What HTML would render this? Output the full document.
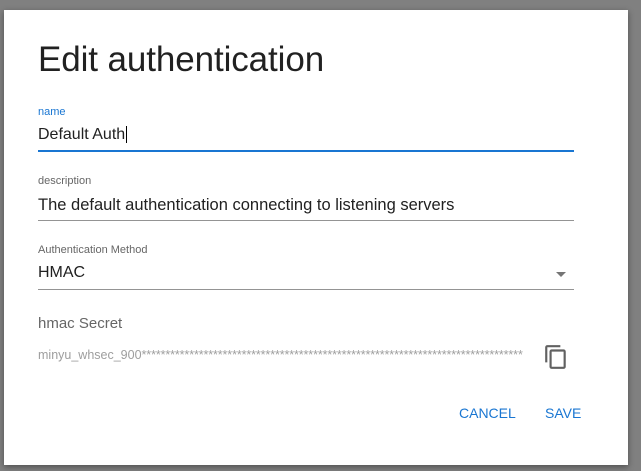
<!DOCTYPE html>
<html><head><style>
html,body{margin:0;padding:0;width:641px;height:471px;background:#808080;overflow:hidden;font-family:"Liberation Sans",sans-serif}
.dlg{position:absolute;left:4px;top:10px;width:624px;height:455px;background:#fff;box-shadow:0 2px 6px rgba(0,0,0,.4)}
.a{position:absolute;white-space:nowrap}
</style></head><body>
<div class="dlg"></div>
<div class="a" style="left:38px;top:40px;font-size:35px;color:#212121;letter-spacing:-0.1px">Edit authentication</div>
<div class="a" style="left:38px;top:106px;font-size:11px;color:#1976d2">name</div>
<div class="a" style="left:38px;top:126px;font-size:16px;color:#212121">Default Auth<span style="border-left:1px solid #000;margin-left:1px"></span></div>
<div class="a" style="left:38px;top:150px;width:536px;height:2px;background:#1976d2"></div>
<div class="a" style="left:38px;top:175px;font-size:11px;color:#666">description</div>
<div class="a" style="left:38px;top:196px;font-size:16.5px;color:#212121">The default authentication connecting to listening servers</div>
<div class="a" style="left:38px;top:220px;width:536px;height:1px;background:#949494"></div>
<div class="a" style="left:38px;top:244px;font-size:11px;color:#666">Authentication Method</div>
<div class="a" style="left:38px;top:264px;font-size:16px;color:#212121">HMAC</div>
<div class="a" style="left:556px;top:272px;width:0;height:0;border-left:5px solid transparent;border-right:5px solid transparent;border-top:5px solid #757575"></div>
<div class="a" style="left:38px;top:289px;width:536px;height:1px;background:#949494"></div>
<div class="a" style="left:38px;top:315px;font-size:15px;color:#666">hmac Secret</div>
<div class="a" style="left:38px;top:348px;font-size:12.5px;color:#9e9e9e;width:494px;overflow:hidden">minyu_whsec_900<span style="letter-spacing:-0.1px">********************************************************************************</span></div>
<svg class="a" style="left:543px;top:344px" width="26" height="26" viewBox="0 0 24 24"><path fill="#616161" d="M16 1H4c-1.1 0-2 .9-2 2v14h2V3h12V1zm3 4H8c-1.1 0-2 .9-2 2v14c0 1.1.9 2 2 2h11c1.1 0 2-.9 2-2V7c0-1.1-.9-2-2-2zm0 16H8V7h11v14z"/></svg>
<div class="a" style="left:459px;top:405px;font-size:14px;color:#1976d2">CANCEL</div>
<div class="a" style="left:545px;top:405px;font-size:14px;color:#1976d2">SAVE</div>
</body></html>
